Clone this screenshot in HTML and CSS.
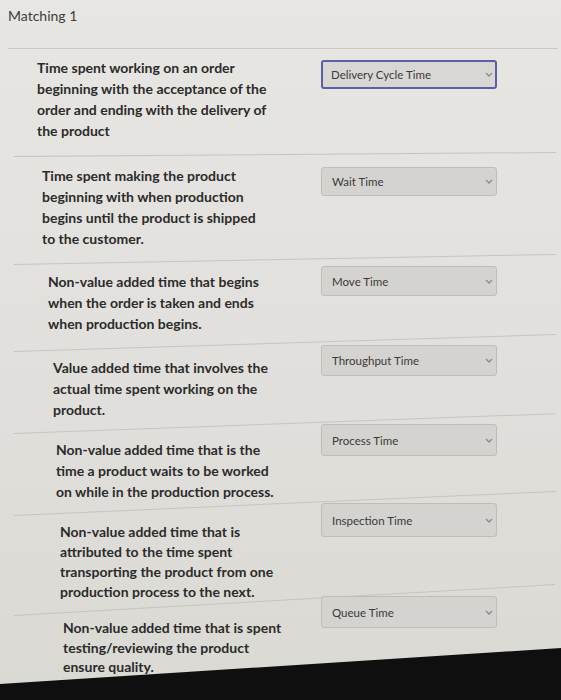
FILE: index.html
```html
<!DOCTYPE html>
<html>
<head>
<meta charset="utf-8">
<link rel="stylesheet" href="styles.css">
</head>
<body>
<div class="page">
  <div class="header"><h1 class="title">Matching 1</h1></div>
  <div class="rows">
    <div class="row">
      <p class="prompt">Time spent working on an order<br>beginning with the acceptance of the<br>order and ending with the delivery of<br>the product</p>
      <div class="select focused"><span>Delivery Cycle Time</span><svg class="chev" viewBox="0 0 8 5" width="8" height="5"><polyline points="1,1 4,4 7,1"/></svg></div>
    </div>
    <div class="row">
      <p class="prompt">Time spent making the product<br>beginning with when production<br>begins until the product is shipped<br>to the customer.</p>
      <div class="select"><span>Wait Time</span><svg class="chev" viewBox="0 0 8 5" width="8" height="5"><polyline points="1,1 4,4 7,1"/></svg></div>
    </div>
    <div class="row">
      <p class="prompt">Non-value added time that begins<br>when the order is taken and ends<br>when production begins.</p>
      <div class="select"><span>Move Time</span><svg class="chev" viewBox="0 0 8 5" width="8" height="5"><polyline points="1,1 4,4 7,1"/></svg></div>
    </div>
    <div class="row">
      <p class="prompt">Value added time that involves the<br>actual time spent working on the<br>product.</p>
      <div class="select"><span>Throughput Time</span><svg class="chev" viewBox="0 0 8 5" width="8" height="5"><polyline points="1,1 4,4 7,1"/></svg></div>
    </div>
    <div class="row">
      <p class="prompt">Non-value added time that is the<br>time a product waits to be worked<br>on while in the production process.</p>
      <div class="select"><span>Process Time</span><svg class="chev" viewBox="0 0 8 5" width="8" height="5"><polyline points="1,1 4,4 7,1"/></svg></div>
    </div>
    <div class="row">
      <p class="prompt">Non-value added time that is<br>attributed to the time spent<br>transporting the product from one<br>production process to the next.</p>
      <div class="select"><span>Inspection Time</span><svg class="chev" viewBox="0 0 8 5" width="8" height="5"><polyline points="1,1 4,4 7,1"/></svg></div>
    </div>
    <div class="row">
      <p class="prompt">Non-value added time that is spent<br>testing/reviewing the product<br>ensure quality.</p>
      <div class="select"><span>Queue Time</span><svg class="chev" viewBox="0 0 8 5" width="8" height="5"><polyline points="1,1 4,4 7,1"/></svg></div>
    </div>
  </div>
</div>
<div class="footer"></div>
</body>
</html>
```
FILE: styles.css
```css
html, body {
  margin: 0;
  padding: 0;
  background: #0f0f0f;
}
body {
  font-family: Lato, "Open Sans", sans-serif;
  color: #2c2c2c;
}
.page {
  height: 690px;
  overflow: hidden;
  background: linear-gradient(180deg, #e7e6e2 0%, #e2e0dc 50%, #dbd9d4 100%);
}
.header {
  margin: 0 3px 0 8px;
  height: 48px;
  border-bottom: 1px solid #c9c7c3;
}
.title {
  margin: 0;
  padding-top: 6px;
  font-size: 14px;
  font-weight: 400;
  line-height: 20px;
  color: #3d3d3d;
}
.rows {
  margin: 0 5px 0 14px;
}
.row {
  position: relative;
  display: grid;
  grid-template-columns: 1fr 176px;
  align-items: start;
  padding: 8px 59px 16px 23px;
}
.row::after {
  content: "";
  position: absolute;
  left: 0;
  right: 0;
  bottom: 0;
  height: 1px;
  background: #c6c4c0;
  transform-origin: left center;
}
.row:nth-child(1)::after { transform: rotate(-0.42deg); }
.row:nth-child(2) { padding-left: 28px; }
.row:nth-child(2)::after { transform: rotate(-1.06deg); }
.row:nth-child(3) { padding: 6px 59px 18px 34px; }
.row:nth-child(3)::after { transform: rotate(-1.8deg); }
.row:nth-child(4) { padding: 5px 59px 14px 39px; }
.row:nth-child(4)::after { transform: rotate(-2.1deg); }
.row:nth-child(5) { padding: 5px 59px 14px 42px; }
.row:nth-child(5)::after { transform: rotate(-2.54deg); }
.row:nth-child(6) { padding: 6px 59px 14px 46px; }
.row:nth-child(6) .prompt { line-height: 20px; }
.row:nth-child(6)::after { transform: rotate(-3.27deg); }
.row:nth-child(7) { padding: 2px 59px 0 49px; }
.row:nth-child(7) .prompt { line-height: 19.5px; }
.row:nth-child(7)::after { display: none; }
.prompt {
  margin: 0;
  white-space: nowrap;
  font-size: 14px;
  font-weight: 700;
  line-height: 21px;
  color: #2b2b2b;
}
.select {
  margin-top: 3px;
  height: 29px;
  box-sizing: border-box;
  display: flex;
  align-items: center;
  justify-content: space-between;
  padding: 0 3px 0 10px;
  background: #d5d3cf;
  border: 1px solid #bfbdb9;
  border-radius: 3px;
  font-size: 11.5px;
  color: #3a3a3a;
}
.row:nth-child(2) .select { margin-top: 2px; }
.row:nth-child(3) .select { margin-top: -5px; height: 30px; }
.row:nth-child(4) .select { margin-top: -12px; height: 31px; }
.row:nth-child(5) .select { margin-top: -15px; height: 32px; }
.row:nth-child(6) .select { margin-top: -19px; height: 34px; }
.row:nth-child(7) .select { margin-top: -22px; height: 32px; }
.select.focused {
  border: 2px solid #5b60a6;
  padding-left: 8px;
  padding-right: 2px;
  background: #d9d7d3;
}
.chev {
  fill: none;
  stroke: #8a8a8a;
  stroke-width: 1.3;
}
.footer {
  position: relative;
  margin-top: -42px;
  height: 52px;
  background: #0f0f0f;
  clip-path: polygon(0 36px, 100% 0, 100% 100%, 0 100%);
}
```
